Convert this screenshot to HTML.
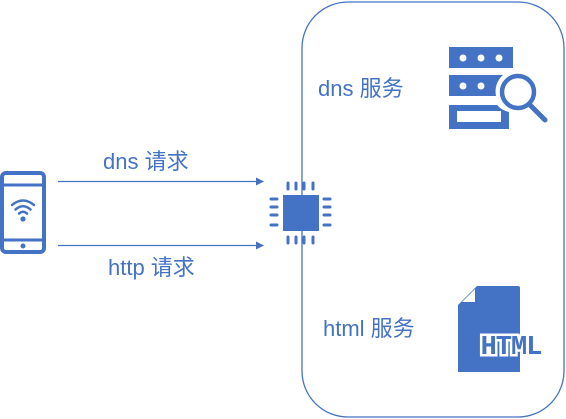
<!DOCTYPE html>
<html><head><meta charset="utf-8"><style>
html,body{margin:0;padding:0;background:#fff;width:566px;height:419px;overflow:hidden}
.t{position:absolute;font-family:"Liberation Sans","Noto Sans CJK SC",sans-serif;font-size:22px;color:#4472c4;white-space:nowrap;line-height:1}
</style></head><body>
<svg width="566" height="419" style="position:absolute;left:0;top:0">
<rect x="302" y="2" width="262" height="415" rx="46" fill="none" stroke="#4472c4" stroke-width="1.3"/>
<rect x="2" y="173" width="42" height="79" rx="4" fill="none" stroke="#4472c4" stroke-width="4"/>
<line x1="2" y1="185" x2="44" y2="185" stroke="#4472c4" stroke-width="3"/>
<line x1="2" y1="240" x2="44" y2="240" stroke="#4472c4" stroke-width="3"/>
<circle cx="23" cy="246" r="2.5" fill="#4472c4"/>
<circle cx="23" cy="219" r="2.6" fill="#4472c4"/>
<path d="M12 205 Q23 196 34 205" fill="none" stroke="#4472c4" stroke-width="2.5" stroke-linecap="round"/>
<path d="M15.5 209.5 Q23 203 30.5 209.5" fill="none" stroke="#4472c4" stroke-width="2.5" stroke-linecap="round"/>
<path d="M19 213.5 Q23 210 27 213.5" fill="none" stroke="#4472c4" stroke-width="2.5" stroke-linecap="round"/>
<line x1="58" y1="181.5" x2="258" y2="181.5" stroke="#4472c4" stroke-width="1.2"/>
<path d="M256 177.5 L264 181.5 L256 185.5Z" fill="#4472c4"/>
<line x1="58" y1="245.5" x2="258" y2="245.5" stroke="#4472c4" stroke-width="1.2"/>
<path d="M256 241.5 L264 245.5 L256 249.5Z" fill="#4472c4"/>
<rect x="283" y="195" width="36" height="36" fill="#4472c4"/>
<g stroke="#4472c4" stroke-width="3" stroke-linecap="round">
<line x1="288" y1="183" x2="288" y2="189"/><line x1="296" y1="183" x2="296" y2="189"/><line x1="304" y1="183" x2="304" y2="189"/><line x1="313" y1="183" x2="313" y2="189"/>
<line x1="288" y1="237" x2="288" y2="243"/><line x1="296" y1="237" x2="296" y2="243"/><line x1="304" y1="237" x2="304" y2="243"/><line x1="313" y1="237" x2="313" y2="243"/>
<line x1="271" y1="199" x2="277" y2="199"/><line x1="271" y1="207" x2="277" y2="207"/><line x1="271" y1="215" x2="277" y2="215"/><line x1="271" y1="225" x2="277" y2="225"/>
<line x1="324" y1="199" x2="330" y2="199"/><line x1="324" y1="207" x2="330" y2="207"/><line x1="324" y1="215" x2="330" y2="215"/><line x1="324" y1="225" x2="330" y2="225"/>
</g>
<rect x="449" y="47" width="64" height="21" fill="#4472c4"/>
<circle cx="463" cy="58" r="3.5" fill="#fff"/><circle cx="481" cy="58" r="3.5" fill="#fff"/><circle cx="499" cy="58" r="3.5" fill="#fff"/>
<path d="M449 75 H503 A22 22 0 0 0 496 96 H449Z" fill="#4472c4"/>
<circle cx="463" cy="86" r="3.5" fill="#fff"/><circle cx="481" cy="86" r="3.5" fill="#fff"/>
<path d="M449 105 H497 A22 22 0 0 0 509 112 V129 H449Z" fill="#4472c4"/>
<rect x="457" y="111" width="44" height="11" fill="#fff"/>
<circle cx="518" cy="92" r="16" fill="none" stroke="#4472c4" stroke-width="4.5"/>
<line x1="530" y1="105" x2="545" y2="120" stroke="#4472c4" stroke-width="5" stroke-linecap="round"/>
<path d="M477 286 H518 A2 2 0 0 1 520 288 V372 H458 V305Z" fill="#4472c4"/>
<path d="M462 302 L475 289 V302Z" fill="#fff"/>
<text x="511" y="354" text-anchor="middle" font-family="Liberation Mono,monospace" font-weight="bold" font-size="27" fill="#4472c4" stroke="#fff" stroke-width="5" paint-order="stroke" letter-spacing="-1">HTML</text>
</svg>
<div class="t" style="left:318px;top:78px">dns 服务</div>
<div class="t" style="left:103px;top:151px">dns 请求</div>
<div class="t" style="left:108px;top:257px">http 请求</div>
<div class="t" style="left:323px;top:318px">html 服务</div>
</body></html>
